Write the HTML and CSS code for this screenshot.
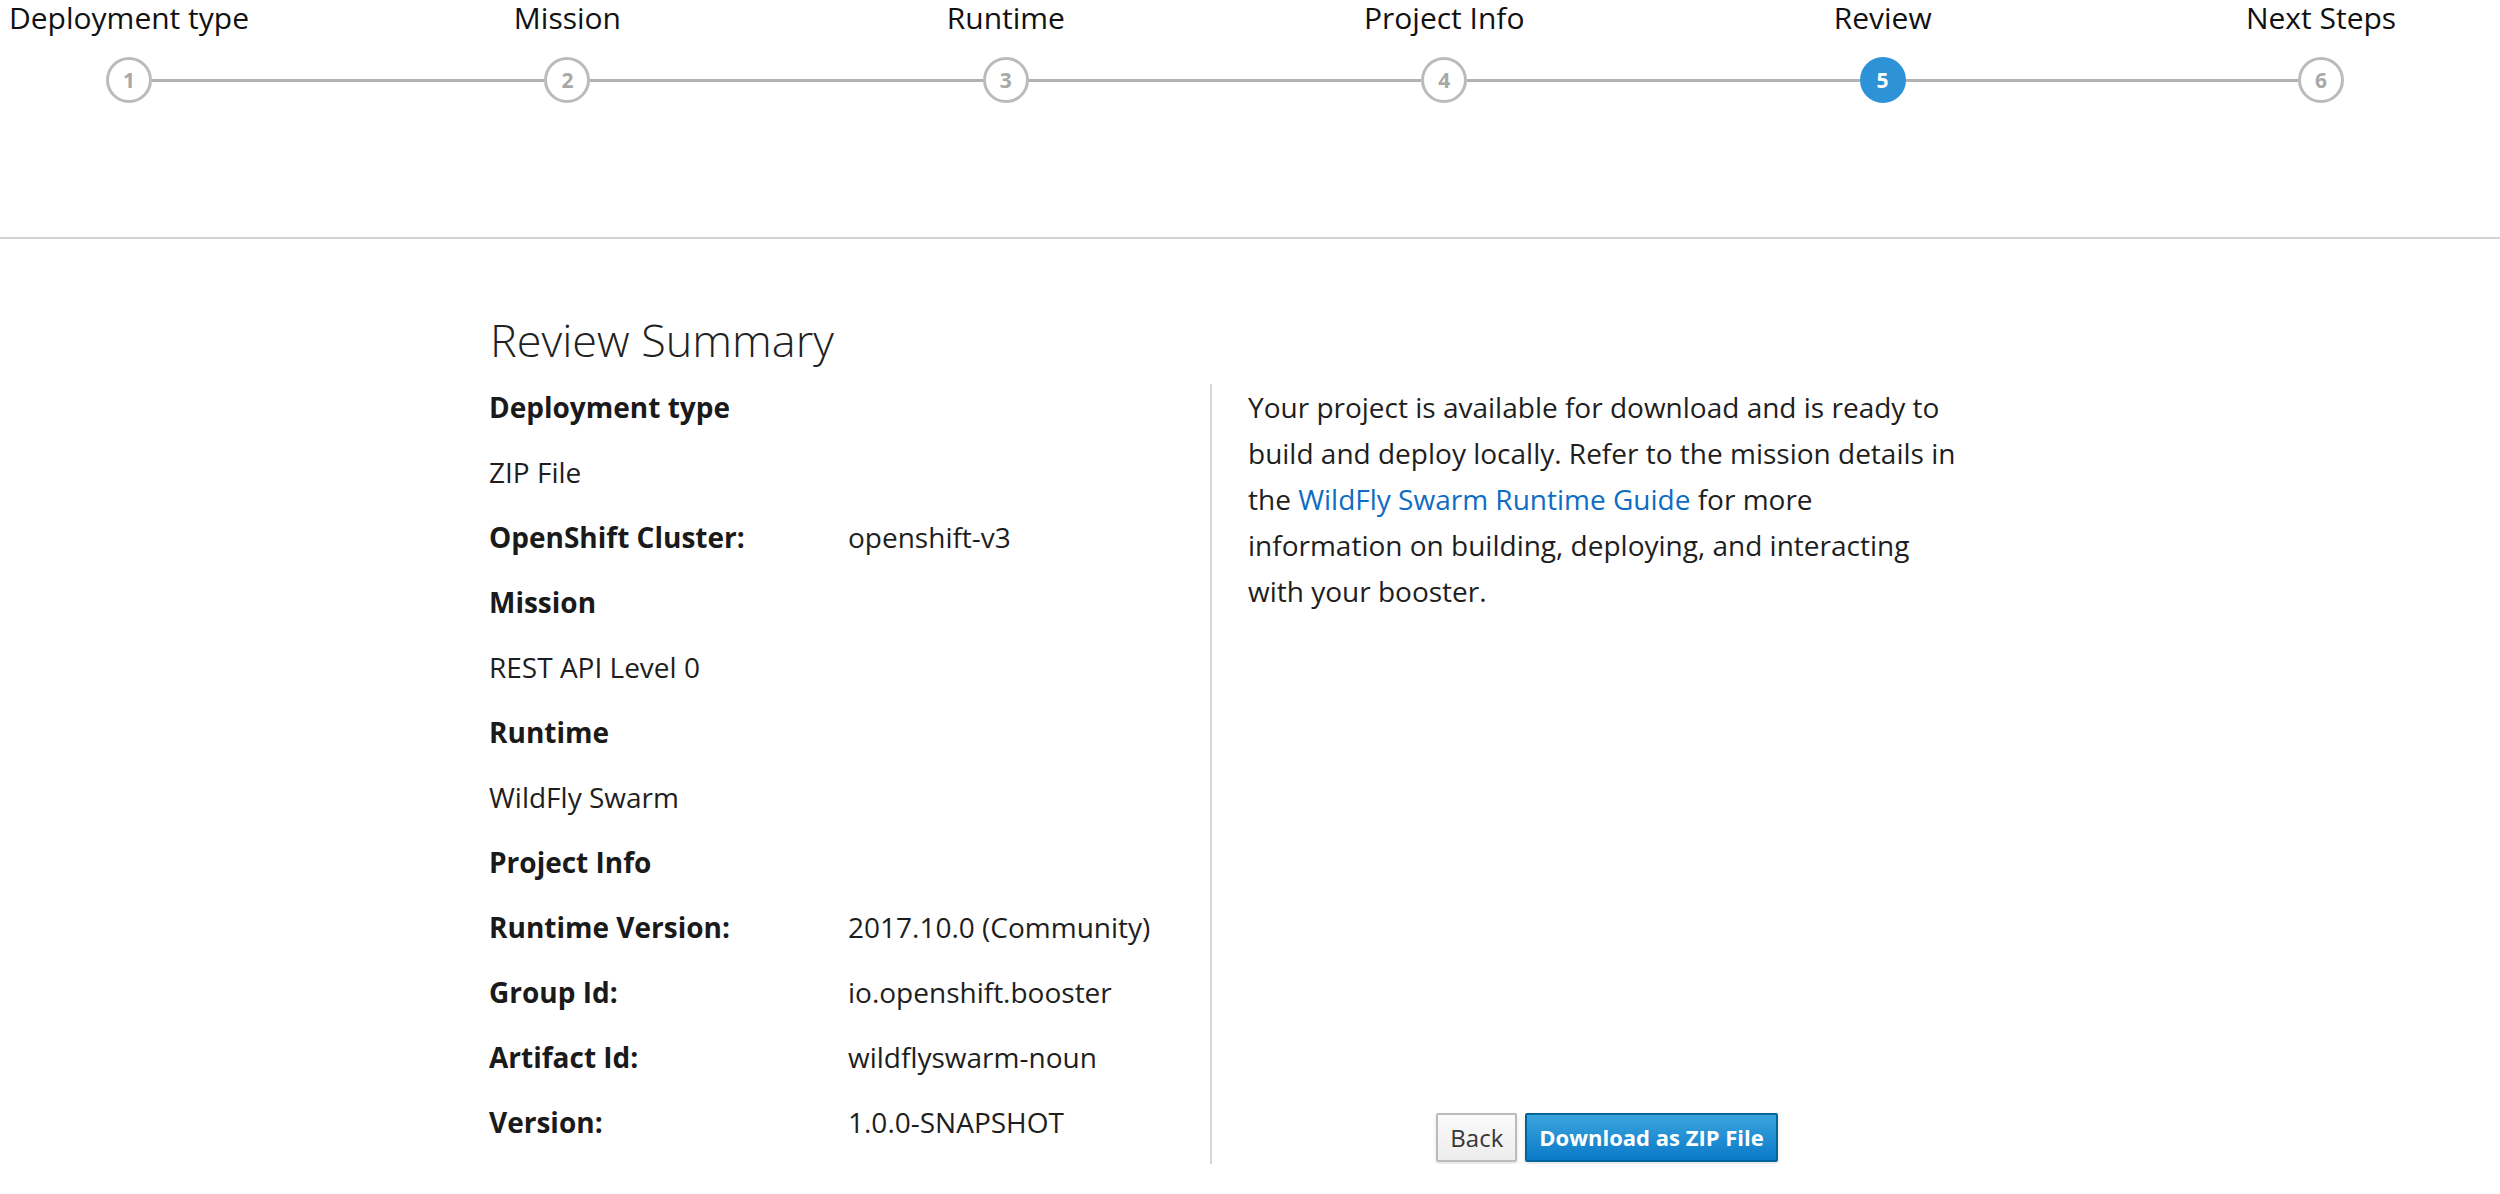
FILE: index.html
```html
<!DOCTYPE html>
<html lang="en">
<head>
<meta charset="utf-8">
<title>Review Summary</title>
<link rel="stylesheet" href="styles.css">
</head>
<body>
<header class="wizard-header">
  <ol class="steps">
    <li class="step"><span class="step-label">Deployment type</span><span class="step-circle">1</span></li>
    <li class="connector"></li>
    <li class="step"><span class="step-label">Mission</span><span class="step-circle">2</span></li>
    <li class="connector"></li>
    <li class="step"><span class="step-label">Runtime</span><span class="step-circle">3</span></li>
    <li class="connector"></li>
    <li class="step"><span class="step-label">Project Info</span><span class="step-circle">4</span></li>
    <li class="connector"></li>
    <li class="step active"><span class="step-label">Review</span><span class="step-circle">5</span></li>
    <li class="connector"></li>
    <li class="step"><span class="step-label">Next Steps</span><span class="step-circle">6</span></li>
  </ol>
</header>
<main class="review">
  <h2 class="review-title">Review Summary</h2>
  <div class="review-columns">
    <div class="summary">
      <div class="cell heading span">Deployment type</div>
      <div class="cell span">ZIP File</div>
      <div class="cell heading">OpenShift Cluster:</div>
      <div class="cell">openshift-v3</div>
      <div class="cell heading span">Mission</div>
      <div class="cell span">REST API Level 0</div>
      <div class="cell heading span">Runtime</div>
      <div class="cell span">WildFly Swarm</div>
      <div class="cell heading span">Project Info</div>
      <div class="cell heading">Runtime Version:</div>
      <div class="cell">2017.10.0 (Community)</div>
      <div class="cell heading">Group Id:</div>
      <div class="cell">io.openshift.booster</div>
      <div class="cell heading">Artifact Id:</div>
      <div class="cell">wildflyswarm-noun</div>
      <div class="cell heading">Version:</div>
      <div class="cell">1.0.0-SNAPSHOT</div>
    </div>
    <div class="details">
      <p class="details-text">Your project is available for download and is ready to build and deploy locally. Refer to the mission details in the <a class="link" href="#">WildFly Swarm Runtime Guide</a> for more information on building, deploying, and interacting with your booster.</p>
      <div class="actions">
        <button class="btn btn-default" type="button">Back</button>
        <button class="btn btn-primary" type="button">Download as ZIP File</button>
      </div>
    </div>
  </div>
</main>
</body>
</html>
```
FILE: styles.css
```css
html, body {
  margin: 0;
  padding: 0;
  background: #ffffff;
}

body {
  font-family: "Open Sans", "Liberation Sans", sans-serif;
  color: #1e1e1e;
}

.wizard-header {
  height: 237px;
  border-bottom: 2px solid #d3d3d3;
}

.steps {
  list-style: none;
  margin: 0;
  padding: 0 156px 0 106px;
  display: flex;
  align-items: flex-start;
}

.step {
  width: 46px;
  flex: none;
  display: flex;
  flex-direction: column;
  align-items: center;
}

.step-label {
  white-space: nowrap;
  font-size: 30px;
  line-height: 36px;
  color: #111111;
}

.step-circle {
  margin-top: 21px;
  width: 46px;
  height: 46px;
  box-sizing: border-box;
  border: 3px solid #bbbbbb;
  border-radius: 50%;
  background: #ffffff;
  color: #a8a8a8;
  font-size: 21px;
  font-weight: 700;
  display: flex;
  align-items: center;
  justify-content: center;
}

.step.active .step-circle {
  background: #2d92d6;
  border-color: #2d92d6;
  color: #ffffff;
}

.connector {
  flex: 1;
  height: 3px;
  margin-top: 79px;
  background: #b2b2b2;
}

.review {
  margin-left: 452px;
  width: 1552px;
}

.review-title {
  margin: 71px 0 15px;
  padding-left: 38px;
  font-size: 45px;
  line-height: 59px;
  font-weight: 300;
  color: #222222;
}

.review-columns {
  display: grid;
  grid-template-columns: 758px 794px;
}

.summary {
  padding: 0 38px 0 37px;
  display: grid;
  grid-template-columns: 359px 1fr;
  align-content: start;
}

.cell {
  font-size: 28px;
  line-height: 46px;
  padding-bottom: 19px;
  white-space: nowrap;
}

.cell.span {
  grid-column: 1 / -1;
}

.cell.heading {
  font-weight: 700;
  color: #1a1a1a;
}

.details {
  border-left: 2px solid #d6d6d6;
  padding: 0 38px 0 36px;
  display: flex;
  flex-direction: column;
}

.details-text {
  margin: 0;
  font-size: 28px;
  line-height: 46px;
}

.link {
  color: #0f6cc4;
  text-decoration: none;
}

.actions {
  margin-top: auto;
  margin-bottom: 2px;
  display: flex;
  justify-content: center;
  gap: 8px;
}

.btn {
  font-family: "Open Sans", "Liberation Sans", sans-serif;
  font-size: 24px;
  line-height: 37px;
  padding: 4px 12px;
  border-radius: 2px;
  border: 2px solid;
  box-shadow: 0 2px 4px rgba(0, 0, 0, 0.12);
  cursor: pointer;
}

.btn-default {
  color: #363636;
  background: linear-gradient(#fafafa, #ededed);
  border-color: #bbbbbb;
}

.btn-primary {
  color: #ffffff;
  font-size: 22px;
  font-weight: 700;
  background: linear-gradient(#39a5dc, #0b79c9);
  border-color: #00659c;
}
```
